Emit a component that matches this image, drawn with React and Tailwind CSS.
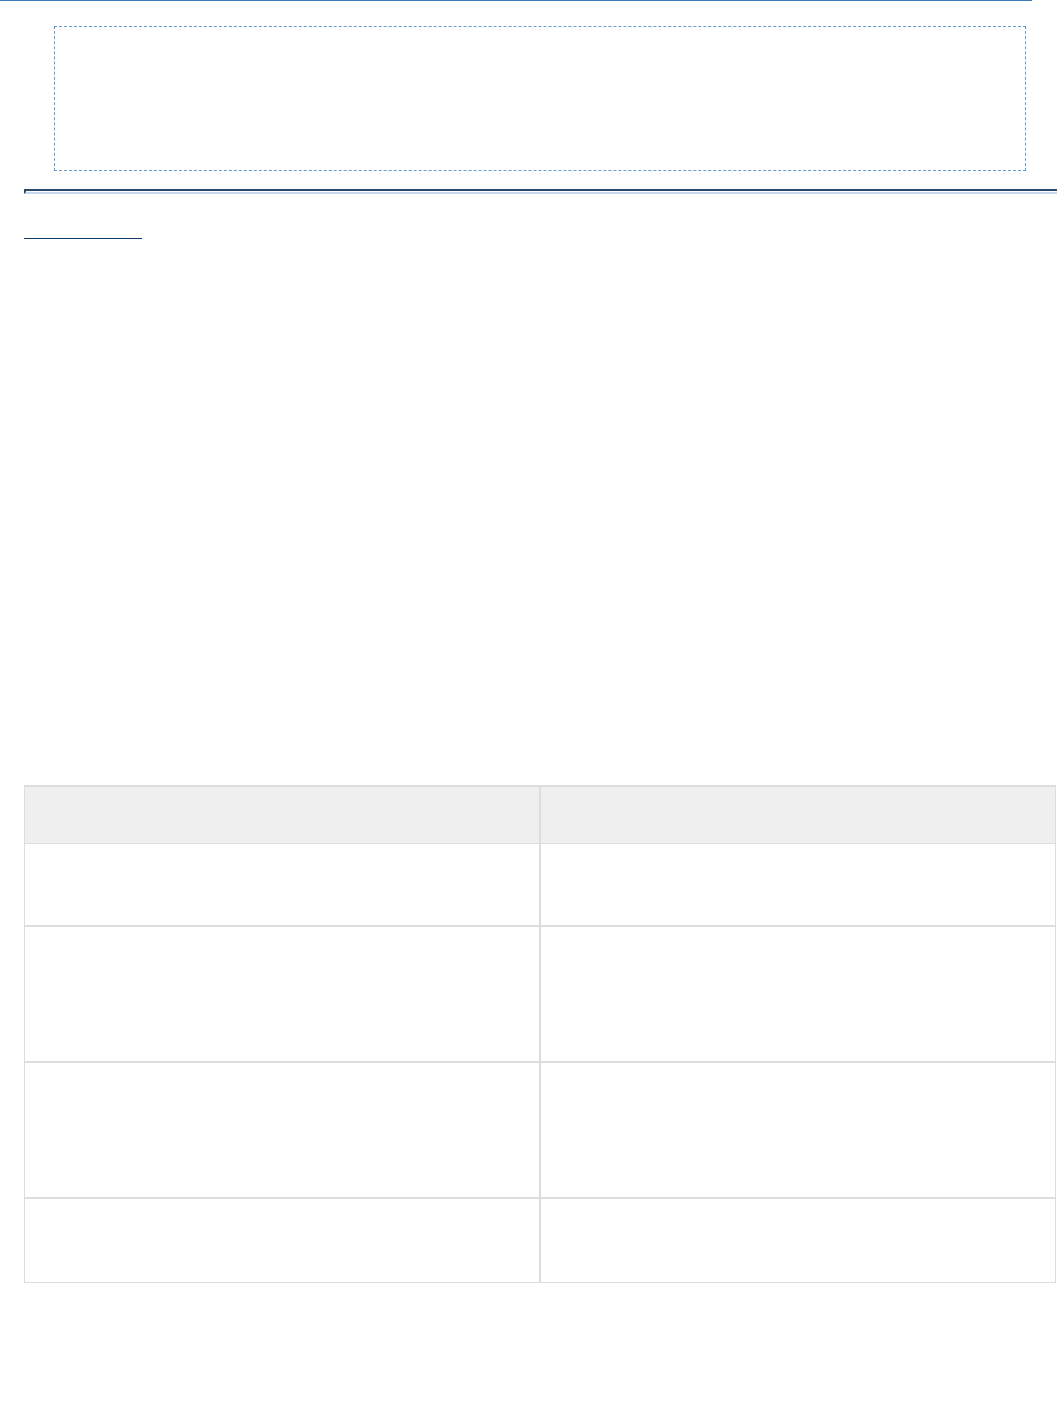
import React from 'react';

const rows = [
  { h: 'h-[83px]' },
  { h: 'h-[136px]' },
  { h: 'h-[136px]' },
  { h: 'h-[83px]' },
];

export default function App() {
  return (
    <div className="w-[1057px] min-h-[1403px] bg-white font-['Liberation_Sans',sans-serif] text-sm text-[#333]">
      {/* top rule */}
      <div className="w-[1032px] h-px bg-[#3b78b8]" />

      {/* dashed banner placeholder */}
      <div className="ml-[54px] mt-[25px] w-[972px] h-[145px] border border-dashed border-[#6a9bd0]" />

      {/* divider */}
      <div className="ml-[24px] mt-[18px] h-[5px] border-t-2 border-l-2 border-b-2 border-t-[#2c4a6c] border-l-[#2c4a6c] border-b-[#c6d9ee]" />

      {/* link */}
      <div className="ml-[24px] mt-[44px] w-[118px] h-px bg-[#0d3b6e]" />

      {/* table */}
      <div className="ml-[24px] mt-[546px] w-[1032px] border border-[#dddddd] border-t-2">
        <div className="grid grid-cols-[516px_1fr] h-[57px] bg-[#efefef] border-b border-[#dddddd]">
          <div className="border-r-2 border-[#dddddd]" />
          <div />
        </div>
        {rows.map((r, i) => (
          <div
            key={i}
            className={`grid grid-cols-[516px_1fr] ${r.h} ${i < rows.length - 1 ? 'border-b-2 border-[#dddddd]' : ''}`}
          >
            <div className="border-r-2 border-[#dddddd]" />
            <div />
          </div>
        ))}
      </div>
    </div>
  );
}
